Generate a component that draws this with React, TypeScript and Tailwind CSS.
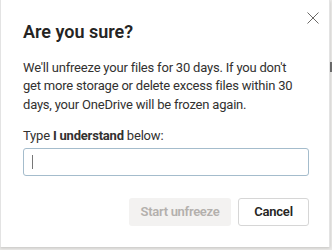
import React from 'react';

const CloseIcon = () => (
  <svg width="12" height="12" viewBox="0 0 12 12" fill="none" stroke="#6b6967" strokeWidth="1">
    <path d="M0.5 0.5 L11.5 11.5 M11.5 0.5 L0.5 11.5" />
  </svg>
);

export default function App() {
  return (
    <div className="relative w-[332px] h-[250px] bg-[#ecebe9] overflow-hidden" style={{ fontFamily: 'Roboto, "Noto Sans", sans-serif' }}>
      <div className="absolute left-[330px] top-[62px] w-[2px] h-[10px] bg-[#6f6f6f]" />
      <div className="relative w-[330px] h-[247px] bg-white border-l border-r border-[#e3e3e3] shadow-[0_1px_3px_rgba(0,0,0,0.18)] text-[#323130]">
        <button className="absolute left-[306px] top-[12px] w-[12px] h-[12px] flex items-center justify-center">
          <CloseIcon />
        </button>
        <div className="pl-[22px] pr-[21px] pt-[20px]">
          <h1 className="text-[18px] leading-[24px] font-semibold text-[#252423]">Are you sure?</h1>
          <p className="mt-[14.5px] text-[13px] leading-[18.5px] tracking-[-0.2px] whitespace-nowrap">
            We'll unfreeze your files for 30 days. If you don't<br />
            get more storage or delete excess files within 30<br />
            days, your OneDrive will be frozen again.
          </p>
          <p className="mt-[13px] text-[13px] leading-[18px] tracking-[-0.2px]">
            Type <span className="font-bold">I understand</span> below:
          </p>
          <div className="mt-[2.5px] h-[28px] w-[286px] rounded-[3px] border border-[#a4bccc] flex items-center px-[8px]">
            <div className="w-[1px] h-[14px] bg-[#777]" />
          </div>
          <div className="mt-[22px] w-[286px] flex justify-end gap-[7px]">
            <button className="h-[28px] w-[102px] rounded-[3px] bg-[#f3f2f1] text-[#b3b0ad] text-[13px] font-semibold tracking-[-0.3px]">Start unfreeze</button>
            <button className="h-[28px] w-[71px] rounded-[3px] border border-[#d6d6d6] bg-white text-[#252423] text-[13px] font-semibold tracking-[-0.2px]">Cancel</button>
          </div>
        </div>
      </div>
    </div>
  );
}
